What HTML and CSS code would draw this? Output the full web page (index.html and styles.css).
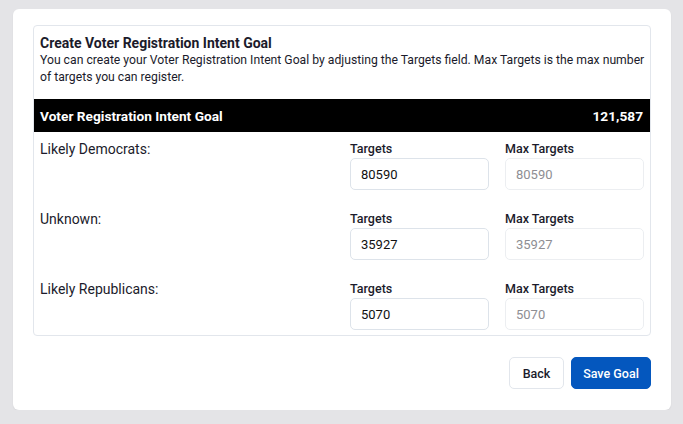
FILE: index.html
```html
<!DOCTYPE html>
<html>
<head>
<meta charset="utf-8">
<link rel="stylesheet" href="styles.css">
</head>
<body>
<div class="card">
  <div class="box">
    <div class="intro">
      <h1 class="title">Create Voter Registration Intent Goal</h1>
      <p class="desc">You can create your Voter Registration Intent Goal by adjusting the Targets field. Max Targets is the max number of targets you can register.</p>
    </div>
    <div class="bar">
      <span>Voter Registration Intent Goal</span>
      <span>121,587</span>
    </div>
    <div class="rows">
      <div class="row">
        <div class="name">Likely Democrats:</div>
        <div class="field">
          <label class="lbl">Targets</label>
          <input class="inp" type="text" value="80590">
        </div>
        <div class="field">
          <label class="lbl">Max Targets</label>
          <input class="inp dis" type="text" value="80590" disabled>
        </div>
      </div>
      <div class="row">
        <div class="name">Unknown:</div>
        <div class="field">
          <label class="lbl">Targets</label>
          <input class="inp" type="text" value="35927">
        </div>
        <div class="field">
          <label class="lbl">Max Targets</label>
          <input class="inp dis" type="text" value="35927" disabled>
        </div>
      </div>
      <div class="row">
        <div class="name">Likely Republicans:</div>
        <div class="field">
          <label class="lbl">Targets</label>
          <input class="inp" type="text" value="5070">
        </div>
        <div class="field">
          <label class="lbl">Max Targets</label>
          <input class="inp dis" type="text" value="5070" disabled>
        </div>
      </div>
    </div>
  </div>
  <div class="actions">
    <button class="btn back">Back</button>
    <button class="btn save">Save Goal</button>
  </div>
</div>
</body>
</html>
```
FILE: styles.css
```css
* { box-sizing: border-box; }
html, body { margin: 0; padding: 0; }
body {
  background: #e4e4e7;
  font-family: "Roboto", "Inter", sans-serif;
  color: #1b1b2b;
  padding: 9px 12px 0 13px;
}
.card {
  width: 658px;
  background: #fff;
  border-radius: 6px;
  padding: 16px 20px 21px 20px;
  box-shadow: 0 1px 2px rgba(0,0,0,0.06);
}
.box {
  border: 1px solid #e2e6ec;
  border-radius: 4px;
  overflow: hidden;
}
.intro {
  padding: 8px 0 13px 6px;
}
.title {
  margin: 0;
  font-size: 14px;
  font-weight: 700;
  line-height: 18px;
}
.desc {
  margin: 0;
  font-size: 12.2px;
  line-height: 17px;
}
.bar {
  background: #000;
  color: #fff;
  display: flex;
  justify-content: space-between;
  align-items: center;
  height: 33px;
  padding: 0 7px 0 6px;
  font-size: 13.7px;
  font-weight: 700;
}
.rows {
  display: flex;
  flex-direction: column;
  gap: 20px;
  padding: 8px 6px 5px 6px;
}
.row {
  display: grid;
  grid-template-columns: 1fr 139px 139px;
  column-gap: 16px;
}
.name {
  font-size: 14px;
  line-height: 18px;
}
.field {
  display: flex;
  flex-direction: column;
}
.lbl {
  font-size: 12.5px;
  font-weight: 500;
  line-height: 18px;
}
.inp {
  height: 32px;
  width: 139px;
  border: 1px solid #dde3ea;
  border-radius: 5px;
  padding: 0 10px;
  font-family: inherit;
  font-size: 13px;
  color: #111;
  background: #fff;
}
.inp.dis {
  color: #8e8e93;
  border-color: #eceef1;
}
.actions {
  display: flex;
  justify-content: flex-end;
  gap: 7px;
  margin-top: 21px;
}
.btn {
  height: 32px;
  border-radius: 5px;
  font-family: inherit;
  font-size: 12.5px;
  font-weight: 500;
  padding: 0;
  white-space: nowrap;
}
.back {
  width: 55px;
  background: #fff;
  border: 1px solid #e2e6ec;
  color: #1b1b2b;
}
.save {
  width: 80px;
  background: #0457be;
  border: 1px solid #0457be;
  color: #fff;
}
```
